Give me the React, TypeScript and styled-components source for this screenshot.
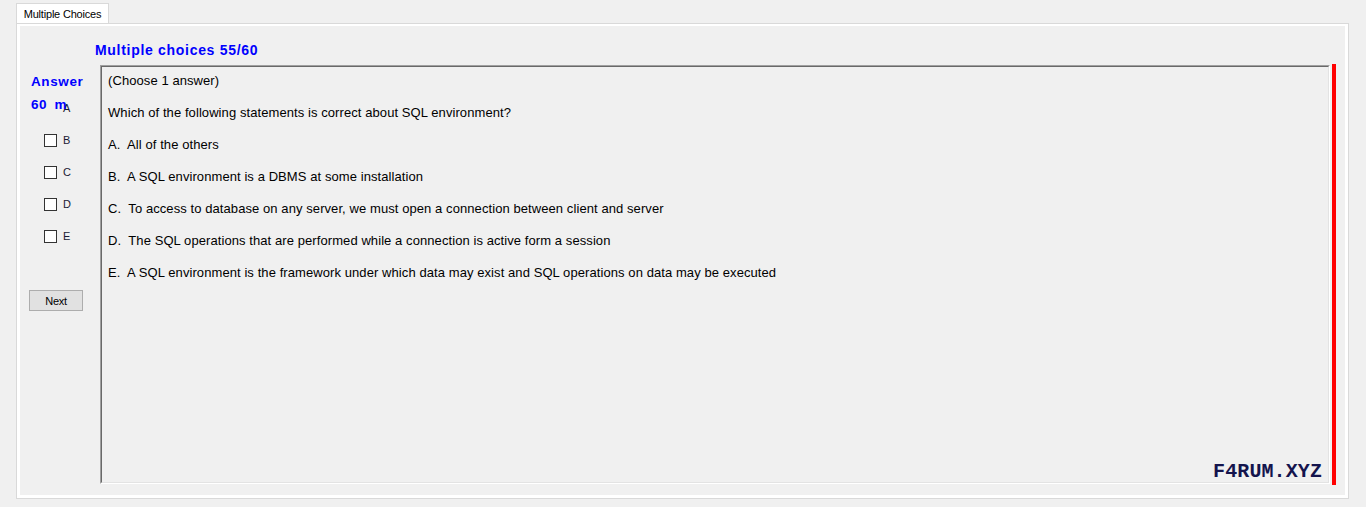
import React from "react";
import styled, { createGlobalStyle } from "styled-components";

const Global = createGlobalStyle`
  html, body { margin: 0; padding: 0; background: #f0f0f0; }
  body { font-family: "Liberation Sans", Arial, sans-serif; }
`;

const Window = styled.div`
  width: 1366px;
  height: 507px;
  box-sizing: border-box;
  padding: 3px 17px 8px 16px;
  display: flex;
  flex-direction: column;
`;

const TabStrip = styled.div`
  display: flex;
  height: 20px;
`;

const Tab = styled.div`
  width: 93px;
  box-sizing: border-box;
  background: #ffffff;
  border: 1px solid #d9d9d9;
  border-bottom: none;
  font-size: 11px;
  color: #000;
  display: flex;
  align-items: center;
  justify-content: center;
  letter-spacing: -0.2px;
`;

const Panel = styled.div`
  flex: 1;
  box-sizing: border-box;
  border: 1px solid #d9d9d9;
  display: flex;
`;

const PanelInner = styled.div`
  flex: 1;
  border: 3px solid #ffffff;
  border-top-width: 2px;
  background: #f0f0f0;
  display: grid;
  grid-template-columns: 80px 1230px 2px 4px;
  grid-template-rows: 39px 1fr;
  padding-bottom: 11px;
`;

const Title = styled.div`
  grid-column: 2 / 5;
  grid-row: 1;
  margin-left: -5px;
  padding-top: 16px;
  font-size: 14px;
  font-weight: bold;
  color: #0000ff;
  letter-spacing: 0.7px;
`;

const Side = styled.div`
  grid-column: 1;
  grid-row: 2;
  position: relative;
  display: flex;
  flex-direction: column;
  padding-top: 27px;
`;

const OverLabel = styled.div<{ $top: number; $wordGap?: number }>`
  position: absolute;
  left: 11px;
  top: ${(p) => p.$top}px;
  font-size: 13.5px;
  font-weight: bold;
  color: #0000ff;
  letter-spacing: 0.6px;
  word-spacing: ${(p) => p.$wordGap ?? 0}px;
  z-index: 2;
`;

const ChoiceRow = styled.label`
  display: flex;
  align-items: center;
  height: 32px;
  padding-left: 24px;
  gap: 6px;
  font-size: 11px;
  color: #1a1a33;
  box-sizing: border-box;
`;

const Box = styled.span<{ $hidden?: boolean }>`
  width: 13px;
  height: 13px;
  box-sizing: border-box;
  border: 1px solid #333333;
  background: #ffffff;
  visibility: ${(p) => (p.$hidden ? "hidden" : "visible")};
`;

const ChoiceLetter = styled.span<{ $shift?: number }>`
  transform: translateY(${(p) => p.$shift ?? 0}px);
`;

const NextButton = styled.button`
  margin-top: 38px;
  margin-left: 9px;
  width: 54px;
  height: 21px;
  box-sizing: border-box;
  background: #e1e1e1;
  border: 1px solid #adadad;
  font-family: "Liberation Sans", Arial, sans-serif;
  font-size: 11px;
  letter-spacing: -0.3px;
  color: #000;
  padding: 0;
`;

const QuestionBox = styled.div`
  grid-column: 2;
  grid-row: 2;
  box-sizing: border-box;
  border-top: 1px solid #a0a0a0;
  border-left: 1px solid #a0a0a0;
  border-right: 1px solid #ffffff;
  border-bottom: 1px solid #ffffff;
  display: flex;
`;

const QuestionInner = styled.div`
  flex: 1;
  border-top: 1px solid #696969;
  border-left: 1px solid #696969;
  border-right: 1px solid #e3e3e3;
  border-bottom: 1px solid #e3e3e3;
  padding: 6px 0 0 6px;
  display: flex;
  flex-direction: column;
  gap: 16px;
  position: relative;
`;

const Line = styled.div`
  font-size: 13px;
  line-height: 16px;
  color: #000;
  letter-spacing: 0.08px;
  white-space: pre;
`;

const Watermark = styled.div`
  position: absolute;
  right: 6px;
  bottom: -1px;
  font-family: "Liberation Mono", "Courier New", monospace;
  font-weight: bold;
  font-size: 20px;
  color: #14144d;
  letter-spacing: 0.1px;
`;

const RedBar = styled.div`
  grid-column: 4;
  grid-row: 2;
  background: #ff0000;
  margin-top: -1px;
  margin-bottom: -1px;
`;

const lines = [
  "(Choose 1 answer)",
  "Which of the following statements is correct about SQL environment?",
  "A.  All of the others",
  "B.  A SQL environment is a DBMS at some installation",
  "C.  To access to database on any server, we must open a connection between client and server",
  "D.  The SQL operations that are performed while a connection is active form a session",
  "E.  A SQL environment is the framework under which data may exist and SQL operations on data may be executed",
];

export default function App() {
  return (
    <>
      <Global />
      <Window>
        <TabStrip>
          <Tab>Multiple Choices</Tab>
        </TabStrip>
        <Panel>
          <PanelInner>
            <Title>Multiple choices 55/60</Title>
            <Side>
              <OverLabel $top={9}>Answer</OverLabel>
              <OverLabel $top={32} $wordGap={3}>60 m</OverLabel>
              <ChoiceRow>
                <Box $hidden />
                <ChoiceLetter $shift={0}>A</ChoiceLetter>
              </ChoiceRow>
              {["B", "C", "D", "E"].map((l) => (
                <ChoiceRow key={l}>
                  <Box />
                  <ChoiceLetter>{l}</ChoiceLetter>
                </ChoiceRow>
              ))}
              <NextButton>Next</NextButton>
            </Side>
            <QuestionBox>
              <QuestionInner>
                {lines.map((t) => (
                  <Line key={t}>{t}</Line>
                ))}
                <Watermark>F4RUM.XYZ</Watermark>
              </QuestionInner>
            </QuestionBox>
            <RedBar />
          </PanelInner>
        </Panel>
      </Window>
    </>
  );
}
